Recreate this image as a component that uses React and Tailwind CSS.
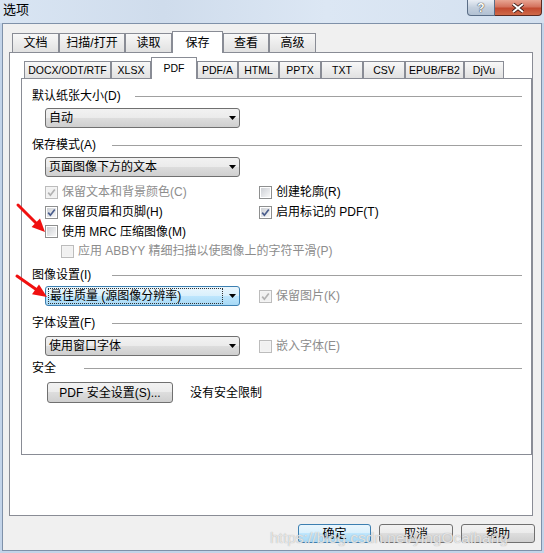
import React from "react";

const btnFace = "bg-[linear-gradient(#f2f2f2_0%,#ebebeb_49%,#dddddd_50%,#cfcfcf_100%)]";
const btnHot = "bg-[linear-gradient(#eaf6fd_0%,#d9f0fc_49%,#bee6fd_50%,#a7d9f5_100%)]";

const outerTabs = [
  { label: "文档", w: "w-[47px]" },
  { label: "扫描/打开", w: "w-[66px]" },
  { label: "读取", w: "w-[47px]" },
  { label: "保存", w: "w-[51px]", active: true },
  { label: "查看", w: "w-[46px]" },
  { label: "高级", w: "w-[47px]" },
];

const innerTabs = [
  { label: "DOCX/ODT/RTF", w: "w-[87px]" },
  { label: "XLSX", w: "w-[40px]" },
  { label: "PDF", w: "w-[46px]", active: true },
  { label: "PDF/A", w: "w-[41px]" },
  { label: "HTML", w: "w-[41px]" },
  { label: "PPTX", w: "w-[42px]" },
  { label: "TXT", w: "w-[42px]" },
  { label: "CSV", w: "w-[42px]" },
  { label: "EPUB/FB2", w: "w-[59px]" },
  { label: "DjVu", w: "w-[40px]" },
];

const Check = ({ checked, disabled }) => (
  <div
    className={`w-[13px] h-[13px] shrink-0 border p-px ${
      disabled ? "border-[#bcbcbc] bg-[#f4f4f4]" : "border-[#8e8f8f] bg-white"
    }`}
  >
    <div
      className={`w-full h-full relative ${
        disabled
          ? "bg-[#f1f1f1]"
          : "bg-linear-to-br from-[#cdd0d5] to-[#f8f8f8]"
      }`}
    >
      {checked && (
        <svg viewBox="0 0 9 9" className="absolute inset-0 w-[9px] h-[9px]">
          <path
            d="M1.2 4.6 L3.4 7.2 L7.8 1.4"
            fill="none"
            stroke={disabled ? "#b2b2b2" : "#4a5d8c"}
            strokeWidth="1.7"
          />
        </svg>
      )}
    </div>
  </div>
);

const CheckItem = ({ label, checked, disabled }) => (
  <div className="flex items-center gap-[4px]">
    <Check checked={checked} disabled={disabled} />
    <span className={disabled ? "text-[#8d8d8d]" : "text-black"}>{label}</span>
  </div>
);

const Header = ({ label, w }) => (
  <div className="flex items-center h-[16px]">
    <span className={`${w} shrink-0 pl-[10px] whitespace-nowrap`}>{label}</span>
    <div className="h-px flex-1 bg-[#a0a0a0] mr-[9px]" />
  </div>
);

const Arrow = () => (
  <svg viewBox="0 0 7 4" className="w-[7px] h-[4px]">
    <path d="M0 0 H7 L3.5 4 Z" fill="#000" />
  </svg>
);

const Combo = ({ value, focused }) => (
  <div
    className={`w-[195px] h-[20px] flex items-center justify-between rounded-[3px] border pl-[2px] pr-[3px] ${
      focused ? `border-[#3c7fb1] ${btnHot}` : `border-[#707070] ${btnFace}`
    }`}
  >
    {focused ? (
      <span className="h-[16px] w-[175px] flex items-center border border-dotted border-[#333] pl-px whitespace-nowrap">
        {value}
      </span>
    ) : (
      <span className="pl-px whitespace-nowrap">{value}</span>
    )}
    <Arrow />
  </div>
);

const DlgButton = ({ label, w, def }) => (
  <div
    className={`${w} h-[19px] flex items-center justify-center rounded-[3px] border ${
      def ? `border-[#3c7fb1] ${btnHot}` : `border-[#707070] ${btnFace}`
    }`}
  >
    {label}
  </div>
);

export default function App() {
  return (
    <div className="w-[544px] h-[553px] relative overflow-hidden flex flex-col bg-[#c3d4e9] text-[12px] leading-[16px] text-black font-['Liberation_Sans','Noto_Sans_CJK_SC',sans-serif]">
      {/* title bar */}
      <div className="h-[23px] shrink-0 flex items-start justify-between bg-[linear-gradient(90deg,#d9e5f3,#cfdcec_30%,#dce7f4_60%,#d3e0ef)]">
        <span className="pl-[3px] pt-[2px] text-[13px]">选项</span>
        <div className="flex mr-[2px]">
          <div className="w-[28px] h-[16px] rounded-bl-[4px] border border-t-0 border-[#5a6d86] bg-[linear-gradient(#e9eef5,#c3cfdd_50%,#b2c1d3)] flex items-center justify-center text-[12px] font-bold text-white [text-shadow:0_0_1px_#333,0_0_1px_#333]">
            ?
          </div>
          <div className="w-[47px] h-[16px] rounded-br-[4px] border border-t-0 border-l-0 border-[#5a2a22] bg-[linear-gradient(#e8a593,#d4735e_45%,#c24a30_55%,#cf6a4a)] flex items-center justify-center">
            <svg viewBox="0 0 14 10" className="w-[14px] h-[10px]">
              <path d="M2 1 L12 9 M12 1 L2 9" stroke="#3a1a14" strokeWidth="3.6" />
              <path d="M2 1 L12 9 M12 1 L2 9" stroke="#fff" strokeWidth="2" />
            </svg>
          </div>
        </div>
      </div>

      {/* window body */}
      <div className="flex-1 mx-[2px] mb-[2px] border border-[#7f91a9] bg-[#f0f0f0] flex flex-col pt-[7px] pl-[6px]">
        {/* outer tabs */}
        <div className="flex items-end h-[21px] pl-[3px]">
          {outerTabs.map((t) =>
            t.active ? (
              <div
                key={t.label}
                className={`${t.w} h-[22px] -mb-px relative z-10 border border-b-0 border-[#898c95] bg-white flex justify-center pt-[3px]`}
              >
                {t.label}
              </div>
            ) : (
              <div
                key={t.label}
                className={`${t.w} h-[19px] border border-b-0 border-[#898c95] bg-linear-to-b from-[#f8f8f8] to-[#e1e1e1] flex items-center justify-center`}
              >
                {t.label}
              </div>
            )
          )}
        </div>

        {/* outer panel */}
        <div className="w-[524px] h-[464px] border border-[#898c95] bg-white flex flex-col">
          {/* inner tabs */}
          <div className="flex items-end h-[25px] pl-[14px] text-[10.5px] leading-[14px]">
            {innerTabs.map((t) =>
              t.active ? (
                <div
                  key={t.label}
                  className={`${t.w} h-[22px] -mb-px relative z-10 border border-b-0 border-[#898c95] bg-white flex justify-center pt-[3px]`}
                >
                  {t.label}
                </div>
              ) : (
                <div
                  key={t.label}
                  className={`${t.w} h-[17px] border border-b-0 border-[#898c95] bg-linear-to-b from-[#f8f8f8] to-[#e1e1e1] flex items-center justify-center`}
                >
                  {t.label}
                </div>
              )
            )}
          </div>

          {/* inner panel */}
          <div className="ml-[11px] w-[511px] h-[377px] border border-[#898c95] flex flex-col pt-[9px]">
            <Header label="默认纸张大小(D)" w="w-[113px]" />
            <div className="mt-[4px] ml-[23px]">
              <Combo value="自动" />
            </div>

            <div className="mt-[9px]">
              <Header label="保存模式(A)" w="w-[90px]" />
            </div>
            <div className="mt-[4px] ml-[23px]">
              <Combo value="页面图像下方的文本" />
            </div>

            <div className="mt-[5px] ml-[23px] grid grid-cols-[214px_1fr]">
              <div className="h-[20px] flex items-center">
                <CheckItem label="保留文本和背景颜色(C)" checked disabled />
              </div>
              <div className="h-[20px] flex items-center">
                <CheckItem label="创建轮廓(R)" />
              </div>
              <div className="h-[20px] flex items-center">
                <CheckItem label="保留页眉和页脚(H)" checked />
              </div>
              <div className="h-[20px] flex items-center">
                <CheckItem label="启用标记的 PDF(T)" checked />
              </div>
              <div className="h-[19px] flex items-center col-span-2">
                <CheckItem label="使用 MRC 压缩图像(M)" />
              </div>
              <div className="h-[20px] flex items-center col-span-2 pl-[16px]">
                <CheckItem label="应用 ABBYY 精细扫描以使图像上的字符平滑(P)" disabled />
              </div>
            </div>

            <div className="mt-[6px]">
              <Header label="图像设置(I)" w="w-[90px]" />
            </div>
            <div className="mt-[3px] ml-[23px] grid grid-cols-[214px_1fr] items-center">
              <Combo value="最佳质量 (源图像分辨率)" focused />
              <CheckItem label="保留图片(K)" checked disabled />
            </div>

            <div className="mt-[9px]">
              <Header label="字体设置(F)" w="w-[90px]" />
            </div>
            <div className="mt-[5px] ml-[23px] grid grid-cols-[214px_1fr] items-center">
              <Combo value="使用窗口字体" />
              <CheckItem label="嵌入字体(E)" disabled />
            </div>

            <div className="mt-[4px]">
              <Header label="安全" w="w-[62px]" />
            </div>
            <div className="mt-[6px] ml-[25px] flex items-center">
              <div className={`w-[126px] h-[21px] flex items-center justify-center rounded-[3px] border border-[#707070] ${btnFace}`}>
                PDF 安全设置(S)...
              </div>
              <span className="ml-[17px]">没有安全限制</span>
            </div>
          </div>
        </div>

        {/* dialog buttons */}
        <div className="mt-[8px] flex justify-end mr-[6px] gap-[8px]">
          <DlgButton label="确定" w="w-[73px]" def />
          <DlgButton label="取消" w="w-[74px]" />
          <DlgButton label="帮助" w="w-[74px]" />
        </div>
      </div>

      {/* watermark */}
      <div className="absolute left-[270px] top-[529px] text-[15.5px] leading-[18px] text-white/70 [text-shadow:0_0_1px_#9a9a9a] pointer-events-none whitespace-nowrap">
        https://blog.csdn.net/yingOcaihang
      </div>

      {/* red annotation arrows */}
      <svg className="absolute left-0 top-0 w-[544px] h-[553px] pointer-events-none" viewBox="0 0 544 553">
        <path d="M18 205 L37 224" stroke="#f01010" strokeWidth="3" strokeLinecap="round" />
        <path d="M45 232 L40 218.6 L31.6 227 Z" fill="#f01010" />
        <path d="M17 276 L37 290" stroke="#f01010" strokeWidth="3" strokeLinecap="round" />
        <path d="M47 297 L39 284.5 L32 294.3 Z" fill="#f01010" />
      </svg>
    </div>
  );
}
